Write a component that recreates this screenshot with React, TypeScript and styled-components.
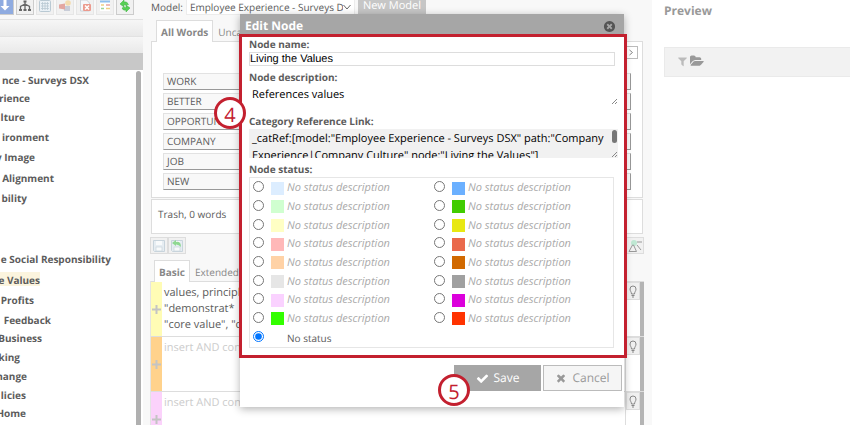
import React, { useState } from "react";
import styled, { createGlobalStyle, css } from "styled-components";

const GlobalStyle = createGlobalStyle`
  * { box-sizing: border-box; }
  body {
    margin: 0;
    overflow: hidden;
    background: #fff;
    color: #5c5c5c;
    font-family: "Open Sans", "Noto Sans", sans-serif;
    font-size: 10px;
    line-height: 16px;
    text-rendering: geometricPrecision;
  }
  button, input, select, textarea { font: inherit; color: inherit; margin: 0; text-rendering: inherit; }
`;

const Page = styled.div`
  display: grid;
  grid-template-columns: 143px minmax(0, 509fr) minmax(0, 198fr);
  height: 100vh;
  overflow: hidden;
`;

/* ---------- Sidebar ---------- */

const Sidebar = styled.aside`
  display: flex;
  flex-direction: column;
  overflow: hidden;
  background: #f8f8f8;
`;

const IconBar = styled.div`
  display: flex;
  gap: 2px;
  height: 19px;
  margin-left: -4px;
  flex: none;
`;

const IconButton = styled.button<{ $active?: boolean; $dim?: boolean }>`
  display: flex;
  align-items: flex-end;
  justify-content: center;
  width: 18px;
  height: 15px;
  padding: 0 0 2px;
  flex: none;
  border: 1px solid ${(p) => (p.$dim ? "#e6e6e6" : "#ccc")};
  border-top: 0;
  background: ${(p) => (p.$active ? "#8fabe0" : "#f1f1f1")};
`;

const SideHeader = styled.div<{ $solid?: boolean }>`
  flex: none;
  height: 17px;
  border-top: 1px solid ${(p) => (p.$solid ? "#c8c8c8" : "#e2e2e2")};
  background: ${(p) => (p.$solid ? "#c8c8c8" : "linear-gradient(#f6f6f6, #e9e9e9)")};
`;

const TreeArea = styled.div`
  display: flex;
  flex: 1;
  justify-content: space-between;
  min-height: 0;
  background: #fff;
`;

const Tree = styled.ul`
  margin: 0;
  padding: 0;
  list-style: none;
  font-weight: bold;
  white-space: nowrap;
`;

const TreeItem = styled.li<{ $end: number; $height: number; $selected?: boolean }>`
  display: flex;
  align-items: center;
  justify-content: flex-end;
  width: ${(p) => p.$end}px;
  height: ${(p) => p.$height}px;
  ${(p) =>
    p.$selected &&
    css`
      background: linear-gradient(#fff 3px, #fbf4de 3px, #fbf4de 17px, #fff 17px);
    `}
`;

const ScrollThumb = styled.div`
  flex: none;
  width: 5px;
  margin: 1px 2px 0 0;
  border-radius: 3px 3px 0 0;
  background: #b0b0b0;
`;

/* ---------- Main ---------- */

const Main = styled.main`
  position: relative;
  display: flex;
  flex-direction: column;
  min-width: 0;
  padding: 0 8px 0 8px;
  background: #f8f8f8;
`;

const ModelRow = styled.div`
  display: flex;
  align-items: center;
  gap: 3px;
  height: 14px;
  flex: none;
`;

const SelectWrap = styled.div`
  display: flex;
  align-items: center;
  width: 169px;
  height: 15px;
  padding-right: 3px;
  border: 1px solid #ececec;
  border-top: 0;
  background: #fff;
`;

const ModelSelect = styled.select`
  flex: 1;
  min-width: 0;
  height: 14px;
  padding: 0 0 0 3px;
  border: 0;
  appearance: none;
  background: none;
  line-height: 14px;
`;

const NewModel = styled.button`
  height: 14px;
  padding: 0 5px 2px;
  border: 0;
  background: #c6c6c6;
  color: #fff;
  font-size: 11px;
  line-height: 12px;
`;

const Tabs = styled.div<{ $indent: number }>`
  display: flex;
  flex: none;
  height: 22px;
  margin: 6px 0 -1px ${(p) => p.$indent}px;
  z-index: 1;
`;

const Tab = styled.button<{ $active?: boolean }>`
  height: 22px;
  padding: 0 4px;
  border: 1px solid ${(p) => (p.$active ? "#ddd" : "transparent")};
  border-bottom: 0;
  background: ${(p) => (p.$active ? "#fff" : "transparent")};
  color: #888;
  font-weight: ${(p) => (p.$active ? "bold" : "normal")};
`;

const WordsPanel = styled.section`
  display: flex;
  flex-direction: column;
  flex: none;
  height: 157px;
  margin-right: 1px;
  padding: 4px 4px 0 11px;
  border: 1px solid #ddd;
  background: #fff;
`;

const NextButton = styled.button`
  display: flex;
  align-items: center;
  align-self: flex-end;
  justify-content: center;
  width: 14px;
  height: 13px;
  margin-bottom: 14px;
  padding: 0;
  border: 1px solid #bbb;
  background: #fff;
`;

const WordList = styled.div`
  display: flex;
  flex-direction: column;
  gap: 3px;
  margin-right: 7px;
`;

const Word = styled.button`
  height: 17px;
  padding: 0 3px;
  border: 1px solid #e2e2e2;
  border-right-color: #999;
  border-bottom-color: #999;
  background: #f8f8f8;
  line-height: 15px;
  text-align: left;
`;

const TrashPanel = styled.section`
  display: flex;
  align-items: center;
  flex: none;
  height: 35px;
  margin: 1px 1px 3px 0;
  padding: 0 6px 6px;
  border: 1px solid #ddd;
  background: #fff;
`;

const RuleTools = styled.div`
  display: flex;
  flex: none;
  height: 17px;
  margin-left: -1px;
`;

const ToolButton = styled.button<{ $end?: boolean }>`
  display: flex;
  align-items: center;
  justify-content: center;
  width: 18px;
  height: 17px;
  margin-left: ${(p) => (p.$end ? "auto" : "0")};
  padding: 0;
  border: 1px solid #ddd;
  background: #f1f1f1;
`;

const Rules = styled.div`
  display: flex;
  flex: 1;
  flex-direction: column;
  min-height: 0;
  margin-left: -1px;
  overflow: hidden;
  border-left: 1px solid #e4e4e4;
  background: #fff;
`;

const Rule = styled.div`
  display: grid;
  grid-template-columns: 11px minmax(0, 1fr) 18px;
  flex: none;
  height: 55px;
  border-top: 1px solid #ddd;
`;

const RuleAdd = styled.button<{ $color: string }>`
  display: flex;
  align-items: center;
  justify-content: center;
  padding: 0;
  border: 0;
  background: ${(p) => p.$color};
`;

const RuleText = styled.div<{ $empty?: boolean }>`
  padding: 3px 2px;
  border-right: 1px solid #ddd;
  color: ${(p) => (p.$empty ? "#ccc" : "#5c5c5c")};
  font-size: 11px;
  line-height: 16px;
  white-space: pre;
`;

const BulbCell = styled.div`
  display: flex;
  justify-content: space-between;
`;

const BulbButton = styled.button`
  display: flex;
  align-items: center;
  justify-content: center;
  width: 14px;
  height: 18px;
  padding: 0;
  border: 1px solid #ddd;
  background: #f0f0f0;
`;

const BulbScroll = styled.div`
  width: 4px;
  background: #b4b4b4;
`;

/* ---------- Dialog ---------- */

const Dialog = styled.form`
  position: absolute;
  z-index: 2;
  top: 14px;
  left: 97px;
  right: 28px;
  background: #fff;
  box-shadow: 0 2px 8px rgba(0, 0, 0, 0.3);
`;

const DialogHeader = styled.header`
  display: flex;
  align-items: center;
  justify-content: space-between;
  height: 22px;
  padding: 2px 8px 0 5px;
  background: #a6a6a6;
  color: #fff;
  font-size: 12px;
  font-weight: bold;
`;

const CloseButton = styled.button`
  display: flex;
  padding: 0;
  border: 0;
  background: none;
`;

const Fields = styled.div`
  position: relative;
  display: flex;
  flex-direction: column;
  padding: 1px 6px 10px 9px;
`;

const Highlight = styled.div`
  position: absolute;
  top: -2px;
  right: -3px;
  bottom: 0;
  left: -1px;
  border: 3px solid #c3202f;
  pointer-events: none;
`;

const Label = styled.label`
  height: 15px;
  font-weight: bold;
  line-height: 15px;
`;

const NameInput = styled.input`
  height: 14px;
  margin: 0 3px 4px 0;
  padding: 0;
  border: 1px solid #ddd;
  color: #000;
  font-family: "Liberation Sans", Arial, sans-serif;
  font-size: 11px;
  line-height: 12px;
`;

const Area = styled.textarea<{ $height: number; $shaded?: boolean }>`
  height: ${(p) => p.$height}px;
  padding: 1px 0 0 3px;
  border: 0;
  overflow: hidden;
  resize: none;
  outline: 0;
  background: ${(p) => (p.$shaded ? "#f1f1f1" : "#fff")};
  color: #000;
  font-size: 11px;
  line-height: 17px;
`;

const AreaWrap = styled.div<{ $gap: number }>`
  position: relative;
  display: flex;
  flex-direction: column;
  margin-bottom: ${(p) => p.$gap}px;
`;

const Grip = styled.svg`
  position: absolute;
  right: 0;
  bottom: 0;
`;

const AreaThumb = styled.div`
  position: absolute;
  top: 1px;
  right: 1px;
  width: 5px;
  height: 13px;
  border-radius: 3px;
  background: #777;
`;

const StatusBox = styled.div`
  display: grid;
  grid-template-rows: repeat(9, 1fr);
  grid-template-columns: 1fr 1fr;
  grid-auto-flow: column;
  column-gap: 2px;
  height: 171px;
  margin: 0 4px 0 0;
  padding: 1px 0 0 3px;
  border: 1px solid #e6e6e6;
`;

const Status = styled.label`
  display: flex;
  align-items: center;
  color: #aaa;
  font-size: 11px;
  font-style: italic;
  white-space: nowrap;
`;

const Radio = styled.input`
  width: 11px;
  height: 11px;
  margin: 0 7px 3px 0;
`;

const Swatch = styled.span<{ $color: string }>`
  width: 13px;
  height: 13px;
  margin-right: 3px;
  background: ${(p) => p.$color};
`;

const PlainText = styled.span`
  color: #5c5c5c;
  font-size: 10px;
  font-style: normal;
`;

const Actions = styled.div`
  display: flex;
  justify-content: flex-end;
  gap: 2px;
  padding: 7px 2px 16px;
`;

const Action = styled.button<{ $primary?: boolean }>`
  display: flex;
  align-items: center;
  justify-content: center;
  gap: 5px;
  width: ${(p) => (p.$primary ? 87 : 79)}px;
  height: 26px;
  padding: 0;
  border: 1px solid ${(p) => (p.$primary ? "#a6a6a6" : "#bbb")};
  background: ${(p) => (p.$primary ? "#a6a6a6" : "#f5f5f5")};
  color: ${(p) => (p.$primary ? "#fff" : "#999")};
  font-size: 12px;
`;

const Step = styled.span<{ $x: number; $y: number }>`
  position: absolute;
  z-index: 3;
  top: ${(p) => p.$y}px;
  left: ${(p) => p.$x}px;
  display: flex;
  align-items: center;
  justify-content: center;
  width: 32px;
  height: 32px;
  padding-top: 3px;
  border: 3px solid #c3202f;
  border-radius: 50%;
  background: #fff;
  color: #c3202f;
  font-size: 20px;
  font-weight: 500;
`;

/* ---------- Preview ---------- */

const Preview = styled.aside`
  min-width: 0;
  padding: 2px 0 0 12px;
`;

const PreviewTitle = styled.h2`
  margin: 0 0 27px;
  color: #999;
  font-size: 12px;
  font-weight: bold;
  line-height: 18px;
`;

const PreviewBar = styled.div`
  display: flex;
  align-items: center;
  gap: 2px;
  height: 30px;
  padding: 0 0 2px 12px;
  border: 1px solid #eaeaea;
  border-right: 0;
  background: #f2f2f2;
`;

/* ---------- Icons ---------- */

const GLYPHS = {
  check:
    "M1671 566q0 40-28 68l-724 724-136 136q-28 28-68 28t-68-28l-136-136-362-362q-28-28-28-68t28-68l136-136q28-28 68-28t68 28l294 295 656-657q28-28 68-28t68 28l136 136q28 28 28 68z",
  times:
    "M1490 1322q0 40-28 68l-136 136q-28 28-68 28t-68-28l-294-294-294 294q-28 28-68 28t-68-28l-136-136q-28-28-28-68t28-68l294-294-294-294q-28-28-28-68t28-68l136-136q28-28 68-28t68 28l294 294 294-294q28-28 68-28t68 28l136 136q28 28 28 68t-28 68l-294 294 294 294q28 28 28 68z",
  filter:
    "M1595 295q17 41-14 70l-493 493v742q0 42-39 59-13 5-25 5-27 0-45-19l-256-256q-19-19-19-45v-486l-493-493q-31-29-14-70 17-39 59-39h1280q42 0 59 39z",
  folder:
    "M1879 952q0 31-31 66l-336 396q-43 51-120.5 86.5t-143.5 35.5h-1088q-34 0-60.5-13t-26.5-43q0-31 31-66l336-396q43-51 120.5-86.5t143.5-35.5h1088q34 0 60.5 13t26.5 43zm-343-344v160h-832q-94 0-197 47.5t-164 119.5l-337 396-5 6q0-4-.5-12.5t-.5-12.5v-960q0-92 66-158t158-66h320q92 0 158 66t66 158v32h544q92 0 158 66t66 158z",
  close:
    "M1277 1122q0-26-19-45l-181-181 181-181q19-19 19-45 0-27-19-46l-90-90q-19-19-46-19-26 0-45 19l-181 181-181-181q-19-19-45-19-27 0-46 19l-90 90q-19 19-19 46 0 26 19 45l181 181-181 181q-19 19-19 45 0 27 19 46l90 90q19 19 46 19 26 0 45-19l181-181 181 181q19 19 45 19 27 0 46-19l90-90q19-19 19-46zm387-226q0 209-103 385.5t-279.5 279.5-385.5 103-385.5-103-279.5-279.5-103-385.5 103-385.5 279.5-279.5 385.5-103 385.5 103 279.5 279.5 103 385.5z",
};

function Glyph({ name, size, color = "currentColor", wide = 1792 }: { name: keyof typeof GLYPHS; size: number; color?: string; wide?: number }) {
  return (
    <svg width={size} height={size} viewBox={`0 0 ${wide} 1792`} aria-hidden="true">
      <path fill={color} d={GLYPHS[name]} />
    </svg>
  );
}

const toolbarIcons = [
  {
    name: "Import",
    active: true,
    art: <path d="M5.500 0h3v6h3l-4.500 4.500L2.500 6h3z" fill="#fff" />,
  },
  {
    name: "Hierarchy",
    art: (
      <g fill="none" stroke="#666" strokeWidth="1.300">
        <path d="M7 1v8M7 4L2.500 6.500V9M7 4l4.500 2.500V9" />
        <path d="M1 10h3M5.500 10h3M10 10h3" strokeWidth="2" />
        <path d="M5.500 1.500h3" strokeWidth="2" />
      </g>
    ),
  },
  {
    name: "Grid",
    dim: true,
    art: (
      <g fill="#eaf1f6" stroke="#b9c9d3">
        <rect x="1.500" y=".5" width="11" height="11" rx="1" />
        <path d="M3 3.500h8M3 6h8M3 8.500h8M4.500 2v8M7 2v8M9.500 2v8" strokeWidth=".8" />
      </g>
    ),
  },
  {
    name: "Categorize",
    dim: true,
    art: (
      <g>
        <rect x="6" y="6" width="6" height="5" fill="#c9cdd8" />
        <path d="M1 4.500l6-1v6l-6-1z" fill="#e3a6a0" />
        <circle cx="10" cy="3" r="2.800" fill="#f3dcaf" />
      </g>
    ),
  },
  {
    name: "Delete",
    dim: true,
    art: (
      <g>
        <path d="M2.500 0h6l3 3v8h-9z" fill="#f5f7fa" stroke="#cdd3da" />
        <rect x="5" y="4" width="8" height="7" rx="1" fill="#eb9a8e" />
        <path d="M7 5.500l4 4m0-4l-4 4" stroke="#fff" strokeWidth="1.500" />
      </g>
    ),
  },
  {
    name: "Report",
    dim: true,
    art: (
      <g>
        <rect x="2" y="1" width="10" height="10" fill="#fff" />
        <path d="M2 1.500h10" stroke="#8fc0ee" strokeWidth="2" />
        <path d="M3 5h3M8 8.500h4" stroke="#f0cf83" strokeWidth="1.500" />
        <path d="M8 5h4" stroke="#e7a5a5" strokeWidth="1.500" />
        <path d="M3 8.500h3" stroke="#9bd59b" strokeWidth="1.500" />
      </g>
    ),
  },
  {
    name: "Refresh",
    art: (
      <g fill="#58d054" stroke="#39b13d" strokeWidth=".5">
        <path d="M2 4l4-4v2q3-1 4.500 2.500L7.500 5Q7 4.500 6 4.700V7z" />
        <path d="M12 8l-4 4v-2q-3 1-4-2l2.500-1q.5 1 1.500.7V5z" />
      </g>
    ),
  },
];

const Bulb = () => (
  <svg width="8" height="13" viewBox="0 0 8 13" fill="none" stroke="#888" aria-hidden="true">
    <path d="M2.500 9C2.500 7 1 6 1 4a3 3 0 016 0c0 2-1.500 3-1.500 5zM2.500 10.500h3M3 12h2" />
  </svg>
);

const Plus = () => (
  <svg width="9" height="9" viewBox="0 0 9 9" stroke="#c4c4c4" strokeWidth="2" aria-hidden="true">
    <path d="M4.500 0v9M0 4.500h9" />
  </svg>
);

const Disk = ({ arrow }: { arrow?: boolean }) => (
  <svg width="14" height="14" viewBox="0 0 14 14" aria-hidden="true">
    <path d="M1.500 1.500h11v11h-10l-1-1z" fill="#e6edf2" stroke="#c8d4dc" />
    <rect x="4" y="2" width="6" height="4" fill="#f8fafb" />
    <rect x="4" y="8" width="6" height="4" fill="#f8fafb" stroke="#c8d4dc" strokeWidth=".7" />
    {arrow && <path d="M2 4l4-3v2q5-1 5 5Q9 5.500 6 5.500V7z" fill="#8fd892" />}
  </svg>
);

const ResizeGrip = () => (
  <Grip width="7" height="7" viewBox="0 0 7 7" stroke="#888" aria-hidden="true">
    <path d="M1 6l5-5M4 6l2-2" />
  </Grip>
);

/* ---------- Data ---------- */

const tree = [
  { text: "nce - Surveys DSX", end: 89, height: 19 },
  { text: "rience", end: 30, height: 18 },
  { text: "lture", end: 25, height: 20 },
  { text: "ironment", end: 49, height: 20 },
  { text: "y Image", end: 35, height: 20 },
  { text: "Alignment", end: 54, height: 21 },
  { text: "bility", end: 27, height: 20 },
  { text: "", end: 27, height: 41 },
  { text: "e Social Responsibility", end: 111, height: 20 },
  { text: "e Values", end: 40, height: 21, selected: true },
  { text: "Profits", end: 34, height: 20 },
  { text: "Feedback", end: 51, height: 19 },
  { text: "Business", end: 42, height: 18 },
  { text: "king", end: 20, height: 19 },
  { text: "hange", end: 27, height: 19 },
  { text: "licies", end: 26, height: 19 },
  { text: "Home", end: 26, height: 18 },
];

const words = ["WORK", "BETTER", "OPPORTUNITY", "COMPANY", "JOB", "NEW"];

const rules = [
  { color: "#fffcb5", text: 'values, principles\n"demonstrat*\n"core value", "core values"' },
  { color: "#ffd28c", text: "insert AND conditions", empty: true },
  { color: "#fbd2fb", text: "insert AND conditions", empty: true },
];

const softColors = ["#dcedff", "#d0ffd0", "#ffffc4", "#ffb8b8", "#ffd2a6", "#e6e6e6", "#fad2ff", "#33ff00"];
const strongColors = ["#6bb0ff", "#41cc00", "#e8e812", "#ea694b", "#d16900", "#a0a0a0", "#dc00dc", "#ff3300"];

export default function App() {
  const [status, setStatus] = useState("none");

  const option = (color: string) => (
    <Status key={color}>
      <Radio type="radio" name="status" checked={status === color} onChange={() => setStatus(color)} />
      <Swatch $color={color} />
      No status description
    </Status>
  );

  return (
    <>
      <GlobalStyle />
      <Page>
        <Sidebar>
          <IconBar>
            {toolbarIcons.map((icon) => (
              <IconButton key={icon.name} aria-label={icon.name} $active={icon.active} $dim={icon.dim}>
                <svg width="14" height="12" viewBox="0 0 14 12" aria-hidden="true">
                  {icon.art}
                </svg>
              </IconButton>
            ))}
          </IconBar>
          <SideHeader />
          <SideHeader />
          <SideHeader $solid />
          <TreeArea>
            <Tree>
              {tree.map((item, i) => (
                <TreeItem key={i} $end={item.end} $height={item.height} $selected={item.selected}>
                  {item.text}
                </TreeItem>
              ))}
            </Tree>
            <ScrollThumb />
          </TreeArea>
        </Sidebar>

        <Main>
          <ModelRow>
            <label htmlFor="model">Model:</label>
            <SelectWrap>
              <ModelSelect id="model">
                <option>Employee Experience - Surveys DSX</option>
              </ModelSelect>
              <svg width="8" height="6" viewBox="0 0 8 6" fill="none" stroke="#666" aria-hidden="true">
                <path d="M.5 1L4 5l3.500-4" />
              </svg>
            </SelectWrap>
            <NewModel>New Model</NewModel>
          </ModelRow>

          <Tabs $indent={5}>
            <Tab $active>All Words</Tab>
            <Tab>Uncategorized</Tab>
          </Tabs>
          <WordsPanel>
            <NextButton aria-label="Next words">
              <svg width="6" height="7" viewBox="0 0 6 7" fill="none" stroke="#888" aria-hidden="true">
                <path d="M1.500 1l3 2.500-3 2.500" />
              </svg>
            </NextButton>
            <WordList>
              {words.map((word) => (
                <Word key={word}>{word}</Word>
              ))}
            </WordList>
          </WordsPanel>
          <TrashPanel>Trash, 0 words</TrashPanel>

          <RuleTools>
            <ToolButton aria-label="Save rules">
              <Disk />
            </ToolButton>
            <ToolButton aria-label="Revert rules">
              <Disk arrow />
            </ToolButton>
            <ToolButton aria-label="Test rules" $end>
              <svg width="15" height="14" viewBox="0 0 15 14" fill="none" stroke="#999" aria-hidden="true">
                <circle cx="6" cy="4" r="3" fill="#bfe8d3" stroke="none" />
                <path d="M4.500 6L1 12.500h7.500L5.500 6zM9 6l4 5M9 3h5" />
              </svg>
            </ToolButton>
          </RuleTools>

          <Tabs $indent={3}>
            <Tab $active>Basic</Tab>
            <Tab>Extended</Tab>
          </Tabs>
          <Rules>
            {rules.map((rule) => (
              <Rule key={rule.color}>
                <RuleAdd $color={rule.color} aria-label="Add condition">
                  <Plus />
                </RuleAdd>
                <RuleText $empty={rule.empty}>{rule.text}</RuleText>
                <BulbCell>
                  <BulbButton aria-label="Suggest">
                    <Bulb />
                  </BulbButton>
                  <BulbScroll />
                </BulbCell>
              </Rule>
            ))}
          </Rules>

          <Dialog role="dialog" aria-labelledby="dialog-title" onSubmit={(e) => e.preventDefault()}>
            <DialogHeader>
              <span id="dialog-title">Edit Node</span>
              <CloseButton type="button" aria-label="Close">
                <Glyph name="close" size={13} color="#555" />
              </CloseButton>
            </DialogHeader>
            <Fields>
              <Label htmlFor="node-name">Node name:</Label>
              <NameInput id="node-name" defaultValue="Living the Values" />
              <Label htmlFor="node-description">Node description:</Label>
              <AreaWrap $gap={9}>
                <Area id="node-description" $height={20} defaultValue="References values" />
                <ResizeGrip />
              </AreaWrap>
              <Label htmlFor="node-link">Category Reference Link:</Label>
              <AreaWrap $gap={4}>
                <Area
                  id="node-link"
                  $height={29}
                  $shaded
                  readOnly
                  defaultValue={'_catRef:[model:"Employee Experience - Surveys DSX" path:"Company Experience|Company Culture" node:"Living the Values"]'}
                />
                <AreaThumb />
                <ResizeGrip />
              </AreaWrap>
              <Label as="span" id="status-label">
                Node status:
              </Label>
              <StatusBox role="radiogroup" aria-labelledby="status-label">
                {softColors.map(option)}
                <Status>
                  <Radio type="radio" name="status" checked={status === "none"} onChange={() => setStatus("none")} />
                  <Swatch $color="transparent" />
                  <PlainText>No status</PlainText>
                </Status>
                {strongColors.map(option)}
              </StatusBox>
              <Highlight />
            </Fields>
            <Actions>
              <Action $primary type="submit">
                <Glyph name="check" size={13} />
                Save
              </Action>
              <Action type="button">
                <Glyph name="times" size={12} />
                Cancel
              </Action>
            </Actions>
          </Dialog>
          <Step $x={71} $y={97}>4</Step>
          <Step $x={295} $y={374}>5</Step>
        </Main>

        <Preview>
          <PreviewTitle>Preview</PreviewTitle>
          <PreviewBar>
            <Glyph name="filter" size={11} color="#bbb" />
            <Glyph name="folder" size={14} color="#999" wide={1920} />
          </PreviewBar>
        </Preview>
      </Page>
    </>
  );
}
